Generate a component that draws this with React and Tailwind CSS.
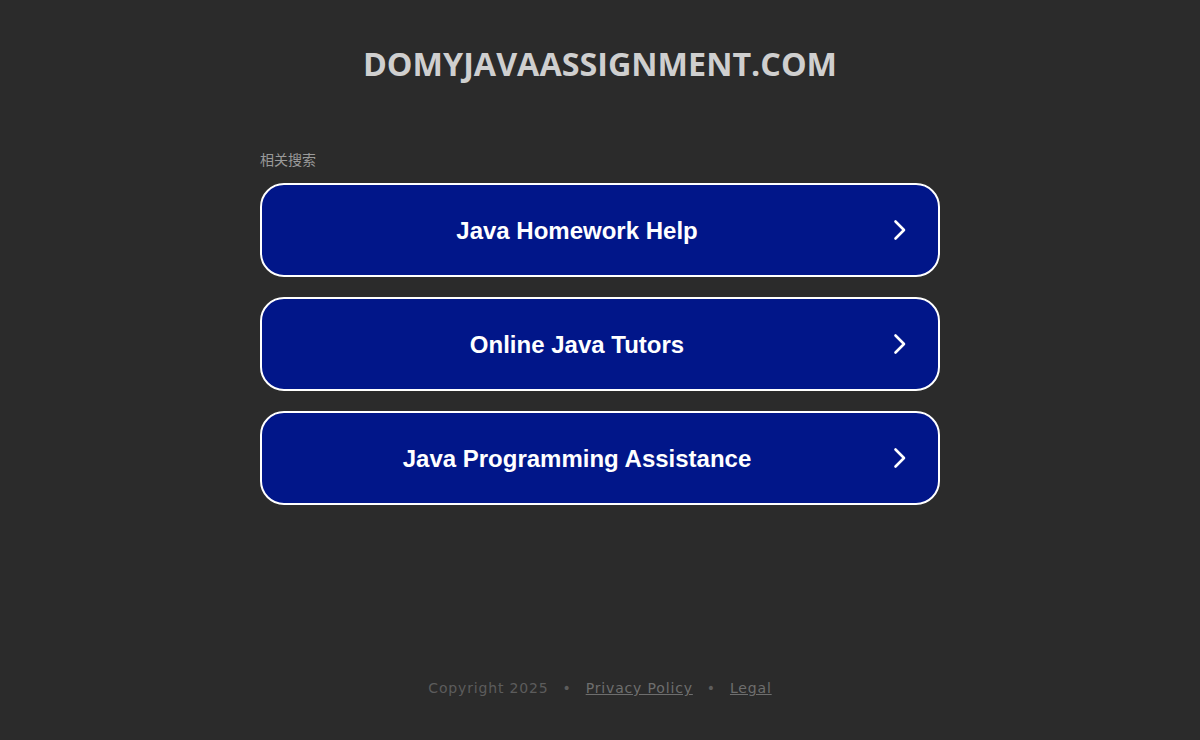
import React from "react";

const LINKS = ["Java Homework Help", "Online Java Tutors", "Java Programming Assistance"];

function Chevron() {
  return (
    <svg width="16" height="24" viewBox="0 0 16 24" fill="none">
      <path d="M3.5 3.5 L12 12 L3.5 20.5" stroke="white" strokeWidth="2.6" strokeLinecap="round" strokeLinejoin="round" />
    </svg>
  );
}

export default function App() {
  return (
    <div className="flex h-[740px] w-full flex-col items-center bg-[#2b2b2b]">
      <h1 className="mt-[43px] text-[32.3px] font-bold leading-[40px] text-[#cfcfcf] [font-family:'Open_Sans',sans-serif]">
        DOMYJAVAASSIGNMENT.COM
      </h1>
      <div className="mt-[67px] w-[680px]">
        <p className="text-[14px] leading-[18px] text-[#9a9a9a] [font-family:'Noto_Sans_CJK_SC',sans-serif]">相关搜索</p>
        <div className="mt-[15px] flex flex-col gap-[20px]">
          {LINKS.map((l) => (
            <a
              key={l}
              href="#"
              className="flex h-[94px] items-center rounded-[24px] border-2 border-white bg-[#011689] pl-0 pr-[30px] text-white"
            >
              <span className="flex-1 pt-[1px] text-center text-[24px] font-bold [font-family:'Liberation_Sans',Arial,sans-serif]">{l}</span>
              <Chevron />
            </a>
          ))}
        </div>
      </div>
      <div className="mt-auto mb-[41px] flex items-center gap-[14px] text-[14px] tracking-[0.06em] text-[#5c5c5c] [font-family:'DejaVu_Sans',sans-serif]">
        <span>Copyright 2025</span>
        <span>•</span>
        <a href="#" className="text-[#6e6e6e] underline">Privacy Policy</a>
        <span>•</span>
        <a href="#" className="text-[#6e6e6e] underline">Legal</a>
      </div>
    </div>
  );
}
